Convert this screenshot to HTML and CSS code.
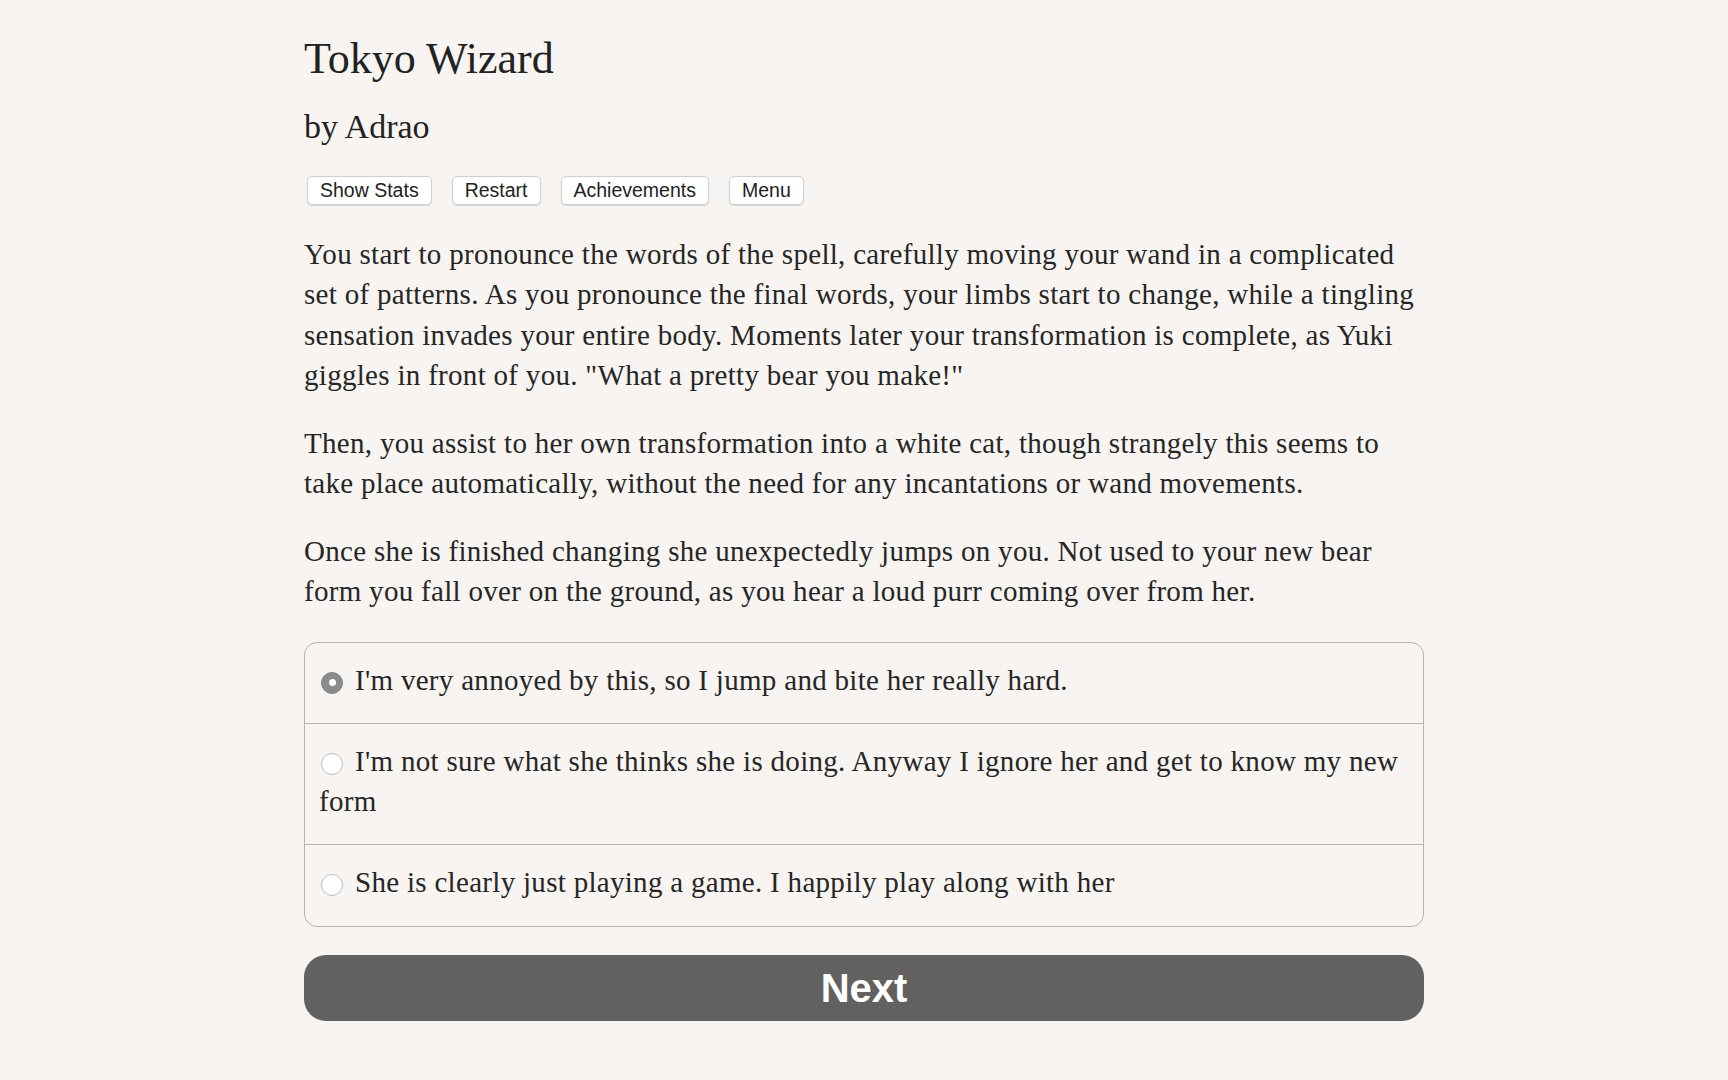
FILE: index.html
```html
<!DOCTYPE html>
<html lang="en">
<head>
<meta charset="utf-8">
<title>Tokyo Wizard</title>
<link rel="stylesheet" href="styles.css">
</head>
<body>
<main class="container">
  <header class="header">
    <h1 class="title">Tokyo Wizard</h1>
    <h2 class="author">by Adrao</h2>
    <div class="buttons">
      <button class="btn">Show Stats</button>
      <button class="btn">Restart</button>
      <button class="btn">Achievements</button>
      <button class="btn">Menu</button>
    </div>
  </header>
  <section class="text">
    <p>You start to pronounce the words of the spell, carefully moving your wand in a complicated set of patterns. As you pronounce the final words, your limbs start to change, while a tingling sensation invades your entire body. Moments later your transformation is complete, as Yuki giggles in front of you. "What a pretty bear you make!"</p>
    <p>Then, you assist to her own transformation into a white cat, though strangely this seems to take place automatically, without the need for any incantations or wand movements.</p>
    <p>Once she is finished changing she unexpectedly jumps on you. Not used to your new bear form you fall over on the ground, as you hear a loud purr coming over from her.</p>
  </section>
  <form class="choice">
    <label class="option"><span class="radio checked"></span>I'm very annoyed by this, so I jump and bite her really hard.</label>
    <label class="option"><span class="radio"></span>I'm not sure what she thinks she is doing. Anyway I ignore her and get to know my new form</label>
    <label class="option"><span class="radio"></span>She is clearly just playing a game. I happily play along with her</label>
  </form>
  <button class="next">Next</button>
</main>
</body>
</html>
```

FILE: styles.css
```css
html, body {
  margin: 0;
  padding: 0;
  background: #f7f4f1;
}
body {
  color: #262626;
  font-family: "Liberation Serif", "Times New Roman", serif;
}
.container {
  width: 1120px;
  margin: 0 auto;
  display: flex;
  flex-direction: column;
}
.header {
  display: flex;
  flex-direction: column;
}
.title {
  margin: 33px 0 0;
  font-size: 44px;
  font-weight: normal;
  line-height: 1.2;
  color: #222;
}
.author {
  margin: 21px 0 0;
  font-size: 34px;
  font-weight: normal;
  line-height: 1.2;
  color: #222;
}
.buttons {
  display: flex;
  gap: 20px;
  margin-top: 28px;
  padding-left: 3px;
}
.btn {
  font-family: "Liberation Sans", Arial, sans-serif;
  font-size: 19.5px;
  color: #222;
  background: #fff;
  border: 1px solid #cfcfcf;
  border-radius: 5px;
  padding: 2.5px 12px;
  box-shadow: 0 1px 1px rgba(0,0,0,0.12);
  line-height: 22px;
}
.text {
  margin-top: 29px;
  font-size: 29px;
  line-height: 40.5px;
  letter-spacing: 0.3px;
}
.text p {
  margin: 0 0 27px;
}
.text p:last-child {
  margin-bottom: 0;
}
.choice {
  margin: 30px 0 0;
  border: 1px solid #b3b3b3;
  border-radius: 13px;
  display: flex;
  flex-direction: column;
  font-size: 29px;
  line-height: 40.5px;
  letter-spacing: 0.3px;
}
.option {
  display: block;
  padding: 17px 14px 22.5px;
  border-top: 1px solid #b3b3b3;
}
.option:first-child {
  border-top: none;
}
.option:last-child {
  padding-bottom: 23.5px;
}
.radio {
  display: inline-block;
  box-sizing: border-box;
  width: 22px;
  height: 22px;
  border-radius: 50%;
  border: 1px solid #bdbdbd;
  background: #fff;
  vertical-align: -4px;
  margin: 0 12px 0 2px;
  position: relative;
}
.radio.checked {
  border-color: #858585;
  background: #8c8c8c;
}
.radio.checked::after {
  content: "";
  position: absolute;
  left: 50%;
  top: 50%;
  width: 7px;
  height: 7px;
  margin: -3.5px 0 0 -3.5px;
  border-radius: 50%;
  background: #fff;
}
.next {
  margin-top: 28px;
  height: 66px;
  width: 100%;
  border: none;
  border-radius: 22px;
  background: #626160;
  color: #fff;
  font-family: "Liberation Sans", Arial, sans-serif;
  font-weight: bold;
  font-size: 40px;
  padding: 0;
}
```
